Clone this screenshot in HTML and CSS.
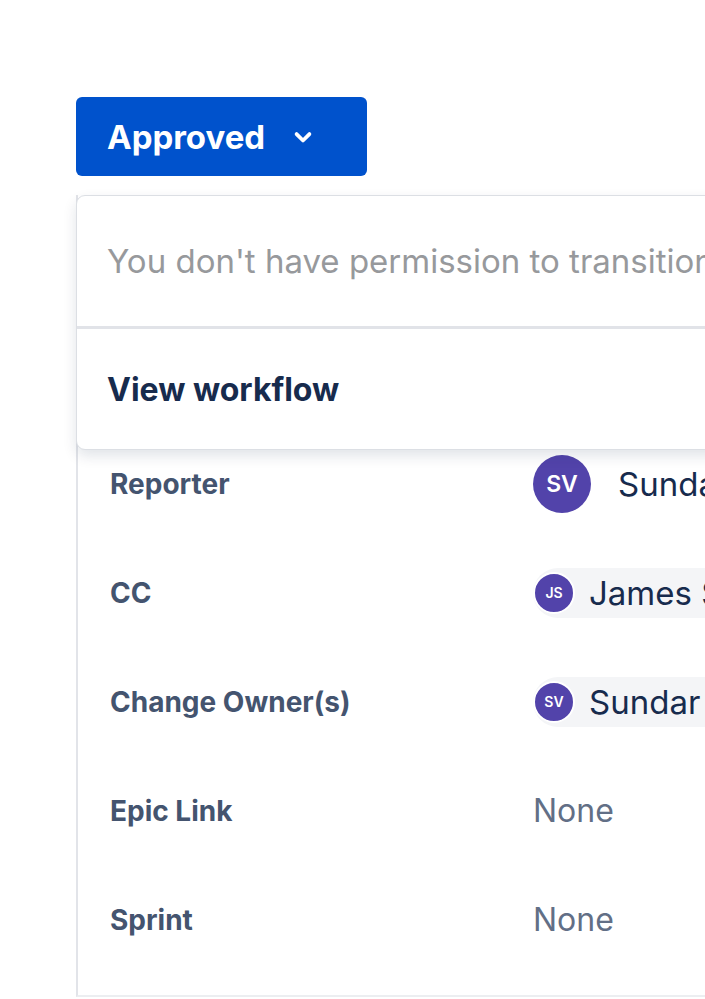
FILE: index.html
```html
<!DOCTYPE html>
<html>

<head>
    <title>Issue - Status</title>
    <link rel="stylesheet" href="styles.css">
</head>

<body>
    <div class="page">
        <button class="status-btn">
            <span>Approved</span>
            <svg class="chevron" viewBox="0 0 24 24" width="24" height="24">
                <path d="M6.5 9.5 L12 15 L17.5 9.5" fill="none" stroke="#fff" stroke-width="3.2"
                    stroke-linecap="round" stroke-linejoin="round" />
            </svg>
        </button>

        <div class="details-wrap">
            <!-- transition menu, open over the details panel -->
            <div class="menu">
                <div class="menu-note">You don't have permission to transition this issue</div>
                <div class="menu-item">View workflow</div>
            </div>

            <div class="details">
                <div class="row">
                    <div class="label">Reporter</div>
                    <div class="value">
                        <span class="avatar avatar-lg">SV</span>
                        <span class="name name-lg">Sundar Varadarajan</span>
                    </div>
                </div>
                <div class="row">
                    <div class="label">CC</div>
                    <div class="value">
                        <span class="chip">
                            <span class="avatar avatar-sm">JS</span>
                            <span class="name">James Smith</span>
                        </span>
                    </div>
                </div>
                <div class="row">
                    <div class="label">Change Owner(s)</div>
                    <div class="value">
                        <span class="chip">
                            <span class="avatar avatar-sm">SV</span>
                            <span class="name">Sundar Varadarajan</span>
                        </span>
                    </div>
                </div>
                <div class="row">
                    <div class="label">Epic Link</div>
                    <div class="value none">None</div>
                </div>
                <div class="row">
                    <div class="label">Sprint</div>
                    <div class="value none">None</div>
                </div>
            </div>
        </div>
    </div>
</body>

</html>
```

FILE: styles.css
```css
body {
    font-family: Inter, 'Noto Sans', sans-serif;
    background: #ffffff;
    color: #172b4d;
    margin: 0;
    overflow: hidden;
}

.page {
    padding: 97px 0 0 76px;
    height: 902px;
    overflow: hidden;
}

.status-btn {
    display: flex;
    align-items: center;
    gap: 24px;
    height: 79px;
    width: 291px;
    padding: 0 0 0 31px;
    background: #0052cc;
    color: #fff;
    border: none;
    border-radius: 6px;
    font-family: inherit;
    font-size: 33px;
    font-weight: 700;
    cursor: pointer;
}

.chevron {
    width: 28px;
    height: 28px;
}

.details-wrap {
    position: relative;
    margin-top: 19px;
}

.menu {
    position: absolute;
    top: 0;
    left: 0;
    width: 800px;
    background: #fff;
    border: 1px solid #dcdfe4;
    border-radius: 9px;
    box-shadow: 0 6px 14px rgba(9, 30, 66, 0.12);
    z-index: 2;
}

.menu-note {
    height: 130px;
    display: flex;
    align-items: center;
    padding-left: 30px;
    color: #97999c;
    font-size: 33px;
    white-space: nowrap;
    border-bottom: 3px solid #e1e3e8;
}

.menu-item {
    height: 120px;
    display: flex;
    align-items: center;
    padding-left: 30px;
    color: #172b4d;
    font-size: 32px;
    font-weight: 700;
}

.details {
    border-left: 2px solid #e2e4e9;
    border-bottom: 2px solid #eceef1;
    padding-top: 234px;
    height: 802px;
    box-sizing: border-box;
}

.row {
    display: flex;
    align-items: center;
    height: 109px;
}

.label {
    flex: 0 0 455px;
    box-sizing: border-box;
    padding-left: 32px;
    color: #44546f;
    font-size: 28px;
    font-weight: 700;
    white-space: nowrap;
}

.value {
    display: flex;
    align-items: center;
    min-width: 0;
    white-space: nowrap;
}

.none {
    color: #626f86;
    font-size: 32px;
}

.avatar {
    display: inline-flex;
    align-items: center;
    justify-content: center;
    border-radius: 50%;
    background: #5243aa;
    color: #fff;
    font-weight: 600;
    flex-shrink: 0;
}

.avatar-lg {
    width: 58px;
    height: 58px;
    font-size: 23px;
}

.avatar-sm {
    width: 38px;
    height: 38px;
    font-size: 14px;
    border: 2px solid #fff;
}

.name {
    color: #172b4d;
    font-size: 33px;
    margin-left: 14px;
}

.name-lg {
    margin-left: 27px;
}

.chip {
    display: flex;
    align-items: center;
    height: 50px;
    padding-right: 20px;
    background: #f4f5f7;
    border-radius: 25px 0 0 25px;
}
```
